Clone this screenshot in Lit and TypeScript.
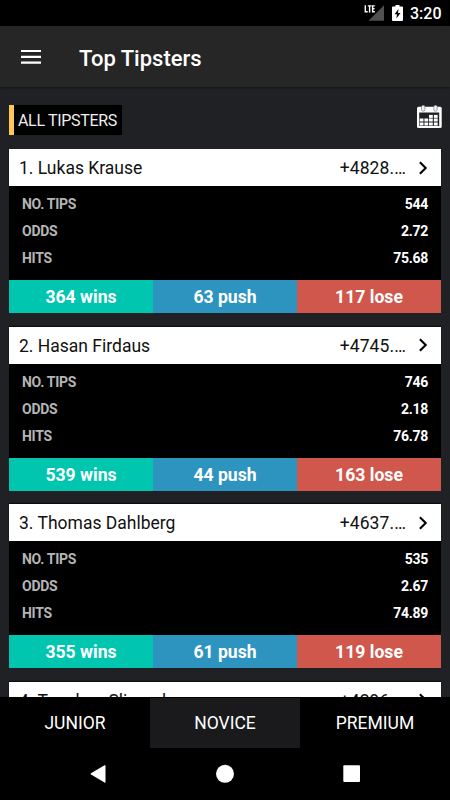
import { LitElement, html, css, svg } from "lit";
import { customElement, property } from "lit/decorators.js";

interface Tipster {
  rank: number;
  name: string;
  profit: string;
  tips: string;
  odds: string;
  hits: string;
  wins: number;
  push: number;
  lose: number;
}

const TIPSTERS: Tipster[] = [
  { rank: 1, name: "Lukas Krause", profit: "+4828.…", tips: "544", odds: "2.72", hits: "75.68", wins: 364, push: 63, lose: 117 },
  { rank: 2, name: "Hasan Firdaus", profit: "+4745.…", tips: "746", odds: "2.18", hits: "76.78", wins: 539, push: 44, lose: 163 },
  { rank: 3, name: "Thomas Dahlberg", profit: "+4637.…", tips: "535", odds: "2.67", hits: "74.89", wins: 355, push: 61, lose: 119 },
  { rank: 4, name: "Teephos Slinnad", profit: "+4296.…", tips: "521", odds: "2.54", hits: "73.90", wins: 341, push: 58, lose: 122 },
];

@customElement("tipster-card")
export class TipsterCard extends LitElement {
  @property({ attribute: false }) tipster!: Tipster;

  static styles = css`
    :host { display: block; height: 164px; flex: none; }
    .head { height: 37px; background: #fff; color: #111; display: flex; align-items: center; font-size: 17.5px; box-shadow: 0 -1px 1px #0009; }
    .name { flex: 1; padding: 1.4px 0 0 10px; white-space: pre; }
    .profit { white-space: pre; padding-top: 1.4px; letter-spacing: 0.1px; }
    .chevron { width: 10px; height: 14px; margin: 0 13px 0 12px; }
    .stats { height: 94px; background: #000; padding: 5px 13px 0 13px; box-sizing: border-box; }
    .row { display: flex; justify-content: space-between; height: 27px; line-height: 27px; font-size: 14px; letter-spacing: -0.27px; font-weight: 700; color: #fff; }
    .label { color: #b5b5b5; }
    .bar { display: grid; grid-template: 33px / 1fr 1fr 1fr; height: 33px; line-height: 35px; text-align: center; color: #fff; font-size: 17.6px; font-weight: 700; }
    .wins { background: #00c6b0; }
    .push { background: #2d94c0; }
    .lose { background: #d0574c; }
  `;

  render() {
    const t = this.tipster;
    const rows = [["NO. TIPS", t.tips], ["ODDS", t.odds], ["HITS", t.hits]];
    return html`
      <div class="head">
        <span class="name">${t.rank}. ${t.name}</span>
        <span class="profit">${t.profit}</span>
        <svg class="chevron" viewBox="0 0 10 14"><path d="M1.900 1.200 7.700 7 1.900 12.800" fill="none" stroke="#000" stroke-width="2.100"/></svg>
      </div>
      <div class="stats">
        ${rows.map(([k, v]) => html`<div class="row"><span class="label">${k}</span><span>${v}</span></div>`)}
      </div>
      <div class="bar">
        <div class="wins">${t.wins} wins</div>
        <div class="push">${t.push} push</div>
        <div class="lose">${t.lose} lose</div>
      </div>
    `;
  }
}

const CALENDAR_CELLS = [
  [13, 10.4], [17.9, 10.4],
  [3.7, 14], [8.4, 14], [13, 14], [17.9, 14],
  [3.7, 18], [8.4, 18], [13, 18], [17.9, 18],
];

@customElement("app-root")
export class AppRoot extends LitElement {
  static styles = css`
    :host { display: flex; flex-direction: column; width: 450px; height: 800px; overflow: hidden; background: #202125; color: #fff; font-family: Roboto, "Liberation Sans", sans-serif; }
    .status { height: 26px; flex: none; background: #000; display: flex; align-items: center; justify-content: flex-end; }
    .signal { width: 20px; height: 18px; margin-right: 8px; }
    .battery { width: 11px; height: 16px; margin-right: 7px; }
    .clock { font-size: 16px; font-weight: 500; line-height: 26px; width: 32px; margin-right: 8px; padding-top: 2px; white-space: nowrap; }
    .appbar { height: 61px; flex: none; background: #262626; display: flex; align-items: center; box-shadow: 0 1px 2px #0006; }
    .menu { width: 20px; height: 14px; margin: 0 38px 0 21px; }
    .title { font-size: 22px; font-weight: 500; padding-top: 3px; }
    .filter { height: 62px; flex: none; display: flex; justify-content: space-between; padding: 18px 8px 0 9px; box-sizing: border-box; }
    .chip { height: 30px; width: 113px; box-sizing: border-box; border-left: 5px solid #fdc75b; background: #000; padding-left: 4px; font-size: 16px; letter-spacing: -0.32px; line-height: 32px; color: #eee; white-space: nowrap; }
    .calendar { width: 26px; height: 24px; }
    .list { flex: 1; min-height: 0; overflow: hidden; display: flex; flex-direction: column; gap: 13.5px; padding: 0 9px; }
    .tabs { height: 51px; flex: none; background: #000; display: grid; grid-template-columns: 1fr 1fr 1fr; text-align: center; font-size: 17.5px; line-height: 51px; padding-top: 1px; box-sizing: border-box; }
    .tab { height: 50px; }
    .tab.active { background: #1a1a1c; }
    .nav { height: 52px; flex: none; background: #000; display: block; }
  `;

  render() {
    return html`
      <div class="status">
        <svg class="signal" viewBox="0 0 20 18">
          <path d="M20 1.300V16.800H4.500Z" fill="#505050"/>
          <path d="M1.300 1.300V7.800H3.700M3.800 1.900H7.500M5.600 1.900V8.400M10.800 1.900H8.600V7.800H10.800M8.600 4.800H10.500" fill="none" stroke="#fff" stroke-width="1.400"/>
        </svg>
        <svg class="battery" viewBox="0 0 11 16">
          <path d="M3.500 0H7.500V1.500H10Q11 1.500 11 2.500V15Q11 16 10 16H1Q0 16 0 15V2.500Q0 1.500 1 1.500H3.500Z" fill="#fff"/>
          <path d="M6.500 4 2.500 9.300H4.900L4.400 13.500 8.500 8.100H6Z" fill="#000"/>
        </svg>
        <span class="clock">3:20</span>
      </div>
      <div class="appbar">
        <svg class="menu" viewBox="0 0 20 14"><path d="M0 1H20M0 6.900H20M0 12.600H20" stroke="#fff" stroke-width="2.200"/></svg>
        <span class="title">Top Tipsters</span>
      </div>
      <div class="filter">
        <div class="chip">ALL TIPSTERS</div>
        <svg class="calendar" viewBox="0 0 26 24">
          <rect x="1" y="1.800" width="24.700" height="21.200" rx="1.500" fill="#fff"/>
          <rect x="3.200" y="7.500" width="20" height="13.500" fill="#202125"/>
          ${CALENDAR_CELLS.map(([x, y]) => svg`<rect x=${x} y=${y - 0.5} width="3.800" height="3" fill="#fff"/>`)}
          <rect x="5.500" y="0.200" width="3.400" height="6" rx="1.600" fill="#f0f0f0" stroke="#6a6b6e" stroke-width="0.600"/>
          <rect x="17.800" y="0.200" width="3.400" height="6" rx="1.600" fill="#f0f0f0" stroke="#6a6b6e" stroke-width="0.600"/>
        </svg>
      </div>
      <div class="list">
        ${TIPSTERS.map((t) => html`<tipster-card .tipster=${t}></tipster-card>`)}
      </div>
      <div class="tabs">
        <div class="tab">JUNIOR</div>
        <div class="tab active">NOVICE</div>
        <div class="tab">PREMIUM</div>
      </div>
      <svg class="nav" viewBox="0 0 450 52">
        <path d="M105.500 17.500V34.200Q105.500 35 104.500 34.600L91 26.600Q90 26 91 25.300L104.500 17.300Q105.500 16.900 105.500 17.500Z" fill="#fff"/>
        <circle cx="225" cy="25.800" r="9" fill="#fff"/>
        <rect x="343.300" y="17.300" width="16.700" height="16.700" rx="1" fill="#fff"/>
      </svg>
    `;
  }
}
